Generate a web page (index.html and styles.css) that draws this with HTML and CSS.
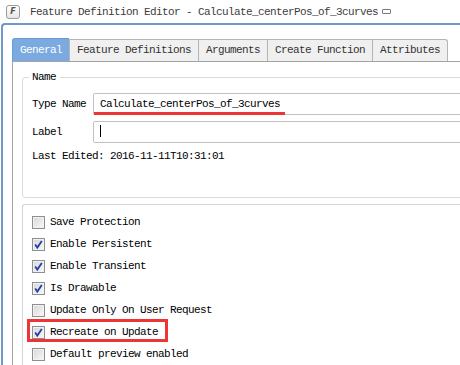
FILE: index.html
```html
<!DOCTYPE html>
<html>
<head>
<meta charset="utf-8">
<link rel="stylesheet" href="styles.css">
</head>
<body>
<div class="window">
  <div class="titlebar">
    <span class="app-icon">F</span>
    <span class="title">Feature Definition Editor - Calculate_centerPos_of_3curves</span>
    <span class="restore-icon"></span>
  </div>
  <div class="frame">
    <div class="tabs">
      <div class="tab active">General</div>
      <div class="tab">Feature Definitions</div>
      <div class="tab">Arguments</div>
      <div class="tab">Create Function</div>
      <div class="tab last">Attributes</div>
    </div>
    <div class="panel">
      <fieldset class="group">
        <legend>Name</legend>
        <div class="field-row">
          <span class="field-label">Type Name</span>
          <div class="input annotated">Calculate_centerPos_of_3curves</div>
        </div>
        <div class="field-row">
          <span class="field-label">Label</span>
          <div class="input"><span class="caret"></span></div>
        </div>
        <div class="meta">Last Edited: 2016-11-11T10:31:01</div>
      </fieldset>
      <div class="options">
        <div class="option"><span class="checkbox"></span>Save Protection</div>
        <div class="option"><span class="checkbox checked"><svg viewBox="0 0 11 11" width="11" height="11"><path d="M2.2 5.6 L4.3 8.6 L8.8 2" fill="none" stroke="#2440a8" stroke-width="1.8"/></svg></span>Enable Persistent</div>
        <div class="option"><span class="checkbox checked"><svg viewBox="0 0 11 11" width="11" height="11"><path d="M2.2 5.6 L4.3 8.6 L8.8 2" fill="none" stroke="#2440a8" stroke-width="1.8"/></svg></span>Enable Transient</div>
        <div class="option"><span class="checkbox checked"><svg viewBox="0 0 11 11" width="11" height="11"><path d="M2.2 5.6 L4.3 8.6 L8.8 2" fill="none" stroke="#2440a8" stroke-width="1.8"/></svg></span>Is Drawable</div>
        <div class="option"><span class="checkbox"></span>Update Only On User Request</div>
        <div class="option highlight"><span class="checkbox checked"><svg viewBox="0 0 11 11" width="11" height="11"><path d="M2.2 5.6 L4.3 8.6 L8.8 2" fill="none" stroke="#2440a8" stroke-width="1.8"/></svg></span>Recreate on Update</div>
        <div class="option"><span class="checkbox"></span>Default preview enabled</div>
      </div>
    </div>
  </div>
</div>
</body>
</html>
```
FILE: styles.css
```css
html, body {
  margin: 0;
  padding: 0;
  background: #ffffff;
}
body {
  width: 460px;
  height: 365px;
  overflow: hidden;
  font-family: "Liberation Mono", "DejaVu Sans Mono", monospace;
  font-size: 11px;
  letter-spacing: -0.6px;
  color: #000;
}
.window {
  width: 460px;
  height: 365px;
  overflow: hidden;
  display: flex;
  flex-direction: column;
}
.titlebar {
  height: 23px;
  flex: none;
  display: flex;
  align-items: center;
  padding-left: 6px;
  color: #3c3c3c;
  white-space: nowrap;
}
.app-icon {
  width: 14px;
  height: 14px;
  box-sizing: border-box;
  border: 1px solid #9a9a9a;
  border-radius: 3px;
  background: linear-gradient(#ffffff, #e6e6e6);
  font-family: "DejaVu Sans", sans-serif;
  font-style: italic;
  font-weight: bold;
  font-size: 8px;
  letter-spacing: 0;
  line-height: 12px;
  text-align: center;
  color: #555;
  margin-right: 10px;
}
.restore-icon {
  width: 9px;
  height: 5px;
  box-sizing: border-box;
  border: 1px solid #7a7a7a;
  border-radius: 1px;
  margin-left: 4px;
  margin-top: -1px;
}
.frame {
  flex: 1;
  min-height: 0;
  display: flex;
  flex-direction: column;
  margin-left: 1px;
  margin-right: -30px;
  border-top: 2px solid #7499c7;
  border-left: 2px solid #7499c7;
  border-top-left-radius: 4px;
  padding: 13px 0 0 9px;
}
.tabs {
  display: flex;
  align-items: flex-end;
  height: 23px;
  flex: none;
}
.tab {
  height: 22px;
  box-sizing: border-box;
  padding: 0 7px;
  border-top: 1px solid #b4b4b4;
  border-left: 1px solid #b4b4b4;
  background: #f0f0f0;
  color: #333;
  line-height: 21px;
  white-space: nowrap;
}
.tab.last {
  border-right: 1px solid #b4b4b4;
  border-top-right-radius: 3px;
}
.tab.active {
  height: 23px;
  background: #7aaae0;
  border-color: #6a9ad2;
  color: #fff;
  border-top-left-radius: 3px;
  line-height: 23px;
}
.panel {
  flex: 1;
  min-height: 0;
  display: flex;
  flex-direction: column;
  border-top: 1px solid #a3a3a3;
  border-left: 1px solid #a3a3a3;
}
.group {
  flex: none;
  margin: 8px 0 0 9px;
  border: 1px solid #d6dce3;
  border-radius: 3px;
  padding: 9px 0 34px 9px;
  min-width: 0;
}
.group legend {
  padding: 0 4px 0 3px;
  margin-left: -3px;
  line-height: 14px;
}
.field-row {
  display: flex;
  align-items: center;
  height: 22px;
  margin-bottom: 6px;
}
.field-label {
  width: 61px;
  flex: none;
}
.input {
  flex: 1;
  position: relative;
  height: 22px;
  box-sizing: border-box;
  border: 1px solid #c2c2c2;
  border-radius: 2px;
  padding-left: 6px;
  line-height: 20px;
  background: #fff;
  white-space: nowrap;
}
.annotated::after {
  content: "";
  position: absolute;
  left: 0;
  bottom: -1px;
  width: 191px;
  height: 3px;
  background: #ee3535;
}
.caret {
  display: inline-block;
  width: 1px;
  height: 12px;
  background: #000;
  vertical-align: middle;
  margin-top: -2px;
}
.meta {
  margin-top: 5px;
  line-height: 14px;
}
.options {
  flex: 1;
  min-height: 0;
  overflow: hidden;
  margin: 6px 0 0 9px;
  border-top: 1px solid #d3d6d9;
  border-left: 1px solid #d3d6d9;
  border-top-left-radius: 3px;
  padding: 6px 0 0 9px;
}
.option {
  position: relative;
  display: flex;
  align-items: center;
  height: 22px;
  width: max-content;
  white-space: nowrap;
}
.checkbox {
  width: 13px;
  height: 13px;
  box-sizing: border-box;
  border: 1px solid #8f8f8f;
  background: linear-gradient(135deg, #d6d6d6, #f9f9f9);
  box-shadow: inset 0 0 0 1px #f2f2f2;
  margin-right: 5px;
  display: flex;
  align-items: center;
  justify-content: center;
  flex: none;
}
.checkbox svg {
  display: block;
}
.highlight::after {
  content: "";
  position: absolute;
  left: -5px;
  top: -2px;
  width: 141px;
  height: 23px;
  box-sizing: border-box;
  border: 3px solid #ee3535;
}
```
